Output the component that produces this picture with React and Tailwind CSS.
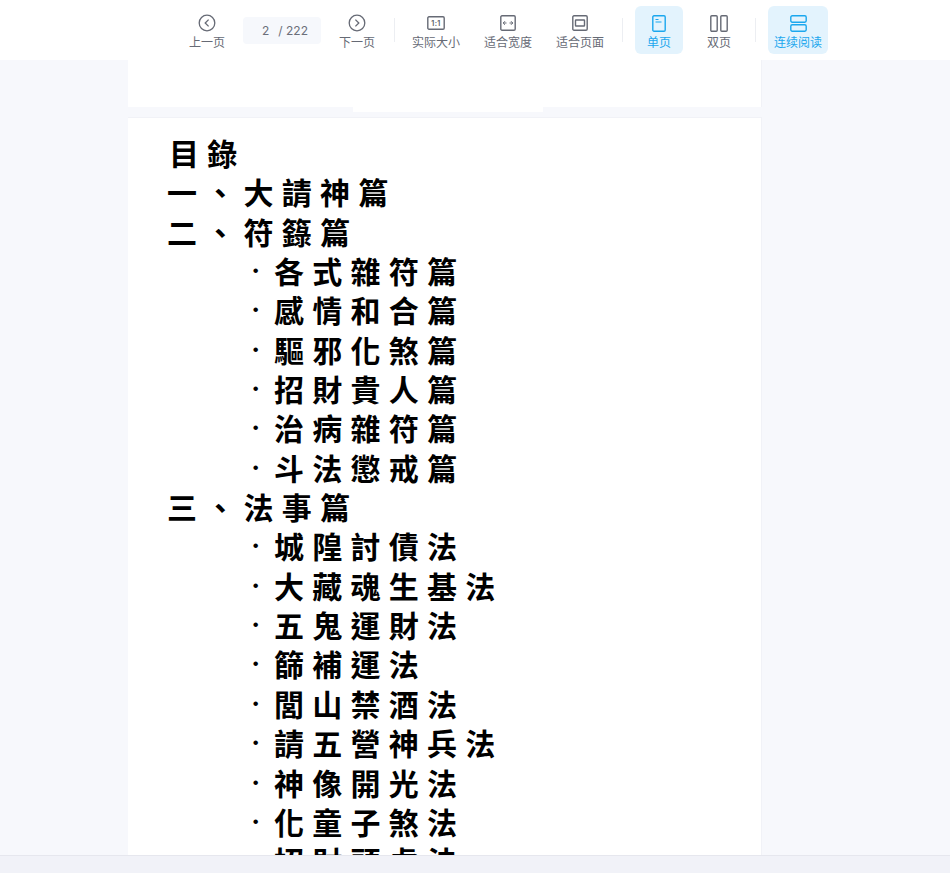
import React from "react";

const Item = ({ label, children, active, w = "w-[48px]", className = "" }) => (
  <div className={`${w} h-[48px] flex flex-col items-center pt-[7px] rounded-md shrink-0 ${active ? "bg-[#e3f3fd] text-[#1ba7ee]" : "text-[#666a75]"} ${className}`}>
    <div className="h-[20px] w-[20px] flex items-center justify-center">{children}</div>
    <div className="text-[12px] leading-[14px] mt-[2px] whitespace-nowrap">{label}</div>
  </div>
);

const Sep = () => <div className="w-px h-[24px] bg-[#eceef2] shrink-0" />;

const S = { fill: "none", stroke: "currentColor" };

const lines = [
  [0, "目錄"],
  [1, "一、大請神篇"],
  [1, "二、符籙篇"],
  [2, "各式雜符篇"],
  [2, "感情和合篇"],
  [2, "驅邪化煞篇"],
  [2, "招財貴人篇"],
  [2, "治病雜符篇"],
  [2, "斗法懲戒篇"],
  [1, "三、法事篇"],
  [2, "城隍討債法"],
  [2, "大藏魂生基法"],
  [2, "五鬼運財法"],
  [2, "篩補運法"],
  [2, "閭山禁酒法"],
  [2, "請五營神兵法"],
  [2, "神像開光法"],
  [2, "化童子煞法"],
  [2, "招財頭虎法"],
];

export default function App() {
  return (
    <div className="h-[873px] w-full overflow-hidden flex flex-col bg-[#f7f8fc] font-['Noto_Sans_CJK_SC','Noto_Sans',sans-serif]">
      <div className="h-[60px] bg-white shrink-0 flex items-start pt-[6px] pl-[183px]">
        <Item label="上一页">
          <svg width="18" height="18" viewBox="0 0 18 18" {...S} strokeWidth="1.3"><circle cx="9" cy="9" r="7.8" /><path d="M10.6 5.6 7.2 9l3.4 3.4" /></svg>
        </Item>
        <div className="w-[78px] h-[27px] mt-[11px] ml-[12px] mr-[12px] bg-[#f6f8fc] rounded-sm shrink-0 flex items-center pl-[19px] text-[12px] text-[#6b6f7a] font-['Inter',sans-serif]">
          <span>2</span><span className="ml-[9px]">/ 222</span>
        </div>
        <Item label="下一页">
          <svg width="18" height="18" viewBox="0 0 18 18" {...S} strokeWidth="1.3"><circle cx="9" cy="9" r="7.8" /><path d="M7.4 5.6 10.8 9l-3.4 3.4" /></svg>
        </Item>
        <div className="ml-[13px] mr-[12px] mt-[12px]"><Sep /></div>
        <Item label="实际大小" w="w-[58px]">
          <svg width="18" height="14" viewBox="0 0 18 14" {...S} strokeWidth="1.4"><rect x="0.8" y="0.8" width="16.4" height="12.4" rx="1.2" /><text x="9" y="9.6" textAnchor="middle" fontSize="7" fontWeight="700" letterSpacing="0.3" fill="currentColor" stroke="none" fontFamily="Inter">1:1</text></svg>
        </Item>
        <Item label="适合宽度" w="w-[48px]" className="ml-[19px]">
          <svg width="16" height="16" viewBox="0 0 16 16" {...S} strokeWidth="1.4"><rect x="0.8" y="0.8" width="14.4" height="14.4" rx="1.2" /><path d="M3 8h3.5M5 6.2 3.2 8 5 9.8M9.5 8H13M11 6.2 12.8 8 11 9.8" strokeWidth="1" /></svg>
        </Item>
        <Item label="适合页面" w="w-[48px]" className="ml-[24px]">
          <svg width="16" height="16" viewBox="0 0 16 16" {...S} strokeWidth="1.4"><rect x="0.8" y="0.8" width="14.4" height="14.4" rx="1.2" /><rect x="3.5" y="5" width="9" height="6" rx="0.5" /></svg>
        </Item>
        <div className="ml-[18px] mr-[12px] mt-[12px]"><Sep /></div>
        <Item label="单页" active>
          <svg width="14" height="17" viewBox="0 0 14 17" {...S} strokeWidth="1.4"><rect x="0.8" y="0.8" width="12.4" height="15.4" rx="1.2" /><path d="M3.5 4.5h3M3.5 7h6" strokeWidth="1.1" /></svg>
        </Item>
        <Item label="双页" className="ml-[12px]">
          <svg width="18" height="17" viewBox="0 0 18 17" {...S} strokeWidth="1.4"><rect x="0.8" y="0.8" width="6.4" height="15.4" rx="1" /><rect x="10.8" y="0.8" width="6.4" height="15.4" rx="1" /></svg>
        </Item>
        <div className="ml-[12px] mr-[12px] mt-[12px]"><Sep /></div>
        <Item label="连续阅读" active w="w-[60px]">
          <svg width="17" height="17" viewBox="0 0 17 17" {...S} strokeWidth="1.4"><rect x="0.8" y="0.8" width="15.4" height="6.4" rx="1.4" /><rect x="0.8" y="9.8" width="15.4" height="6.4" rx="1.4" /></svg>
        </Item>
      </div>

      <div className="flex-1 min-h-0 flex flex-col items-start overflow-hidden">
        <div className="relative ml-[128px] w-[634px] h-[47px] bg-white border-r border-[#f1f2f7] shrink-0">
          <div className="absolute left-[225px] top-[47px] w-[190px] h-[5px] bg-white" />
        </div>
        <div className="ml-[128px] mt-[10px] w-[634px] flex-1 min-h-0 bg-white border-r border-t border-[#f1f2f7] overflow-hidden pt-[15px] pl-px text-black font-bold text-[30px] leading-[39.35px] tracking-[8.25px] font-['Noto_Sans_CJK_TC',sans-serif]">
          {lines.map(([lvl, t], i) => (
            <div key={i} className={`flex whitespace-nowrap ${lvl === 0 ? "pl-[40px]" : lvl === 1 ? "pl-[38px]" : "pl-[122px]"}`}>
              {lvl === 2 && <span className="w-[23px] shrink-0 tracking-normal text-[28px] font-['Liberation_Serif',serif]">·</span>}
              <span>{t}</span>
            </div>
          ))}
        </div>
      </div>

      <div className="h-[18px] shrink-0 bg-[#f1f2f8] border-t border-[#e6e7ee]" />
    </div>
  );
}
